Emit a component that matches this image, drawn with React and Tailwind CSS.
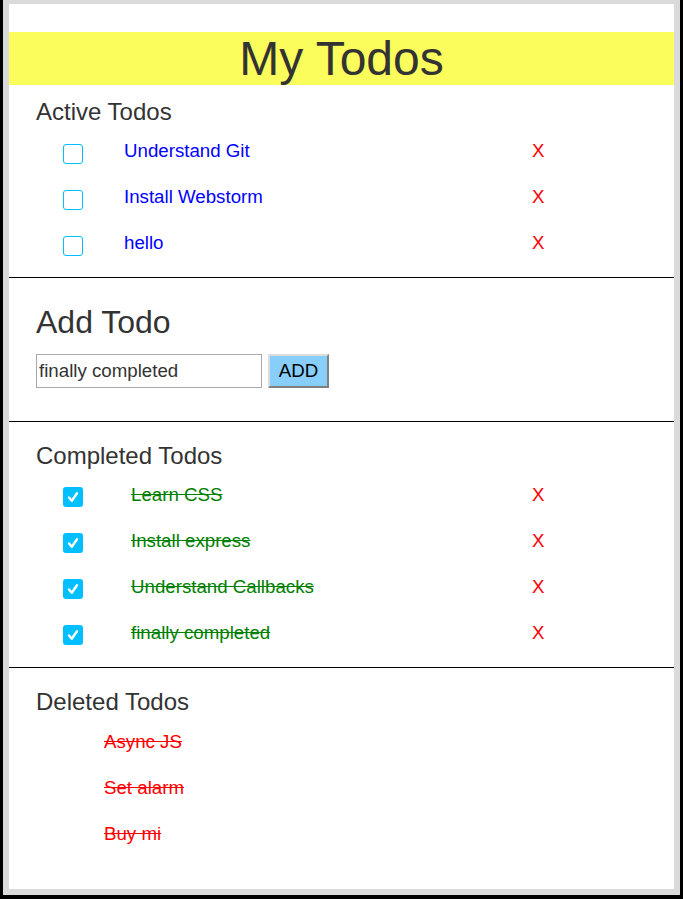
import React from 'react';

const ACTIVE = ['Understand Git', 'Install Webstorm', 'hello'];
const DONE = ['Learn CSS', 'Install express', 'Understand Callbacks', 'finally completed'];
const DELETED = ['Async JS', 'Set alarm', 'Buy mi'];

function Box({ checked }) {
  if (!checked) {
    return <span className="block w-5 h-5 translate-y-[3px] rounded-[3px] border border-[#00bfff] bg-white" />;
  }
  return (
    <span className="flex items-center justify-center w-5 h-5 translate-y-[2px] rounded-[3px] bg-[#00bfff]">
      <svg width="14" height="14" viewBox="0 0 14 14">
        <path d="M3 7.5 L5.8 10.8 L11 3.2" fill="none" stroke="white" strokeWidth="2.4" strokeLinecap="round" strokeLinejoin="round" />
      </svg>
    </span>
  );
}

function Row({ text, checked }) {
  return (
    <div className="flex items-center h-[46px] pl-[27px]">
      <Box checked={checked} />
      <span
        className={
          checked
            ? 'ml-[48px] w-[401px] text-[18.7px] text-[#008000] line-through'
            : 'ml-[41px] w-[408px] text-[18.7px] text-[#0000ff]'
        }
      >
        {text}
      </span>
      <span className="text-[18.7px] text-[#ff0000]">X</span>
    </div>
  );
}

export default function App() {
  return (
    <div
      className="w-[683px] h-[899px] bg-black pl-[3px] pr-[3px] pb-[4px] text-[#333]"
      style={{ fontFamily: '"Liberation Sans", Arial, sans-serif' }}
    >
      <div className="h-full bg-[#dadada] pt-[4px] px-[6px] pb-[6px]">
        <div className="h-full bg-white pt-[28px]">
          <h1 className="bg-[#fbfd5c] text-center text-[48px] leading-[53px] text-[#333]">My Todos</h1>

          <section className="px-[27px] pt-[13px] pb-[11px]">
            <h2 className="text-[24px] leading-[28px] mb-[2px]">Active Todos</h2>
            {ACTIVE.map((t) => (
              <Row key={t} text={t} />
            ))}
          </section>

          <div className="border-t border-black" />

          <section className="px-[27px] pt-[26px] pb-[33px]">
            <h2 className="text-[32px] leading-[37px]">Add Todo</h2>
            <div className="flex items-center gap-[6px] mt-[13px]">
              <input
                defaultValue="finally completed"
                className="w-[226px] h-[34px] border border-[#a9a9a9] px-[2px] text-[18.7px] text-[#333] outline-none"
              />
              <button className="h-[34px] w-[61px] bg-[#87cefa] text-[18.7px] text-black border-2 border-t-[#dcdcdc] border-l-[#dcdcdc] border-r-[#808080] border-b-[#808080]">
                ADD
              </button>
            </div>
          </section>

          <div className="border-t border-black" />

          <section className="px-[27px] pt-[20px] pb-[11px]">
            <h2 className="text-[24px] leading-[28px] mb-[2px]">Completed Todos</h2>
            {DONE.map((t) => (
              <Row key={t} text={t} checked />
            ))}
          </section>

          <div className="border-t border-black" />

          <section className="px-[27px] pt-[20px]">
            <h2 className="text-[24px] leading-[28px] mb-[3px]">Deleted Todos</h2>
            {DELETED.map((t) => (
              <div key={t} className="flex items-center h-[46px] pl-[68px]">
                <span className="text-[18.7px] text-[#ff0000] line-through">{t}</span>
              </div>
            ))}
          </section>
        </div>
      </div>
    </div>
  );
}
